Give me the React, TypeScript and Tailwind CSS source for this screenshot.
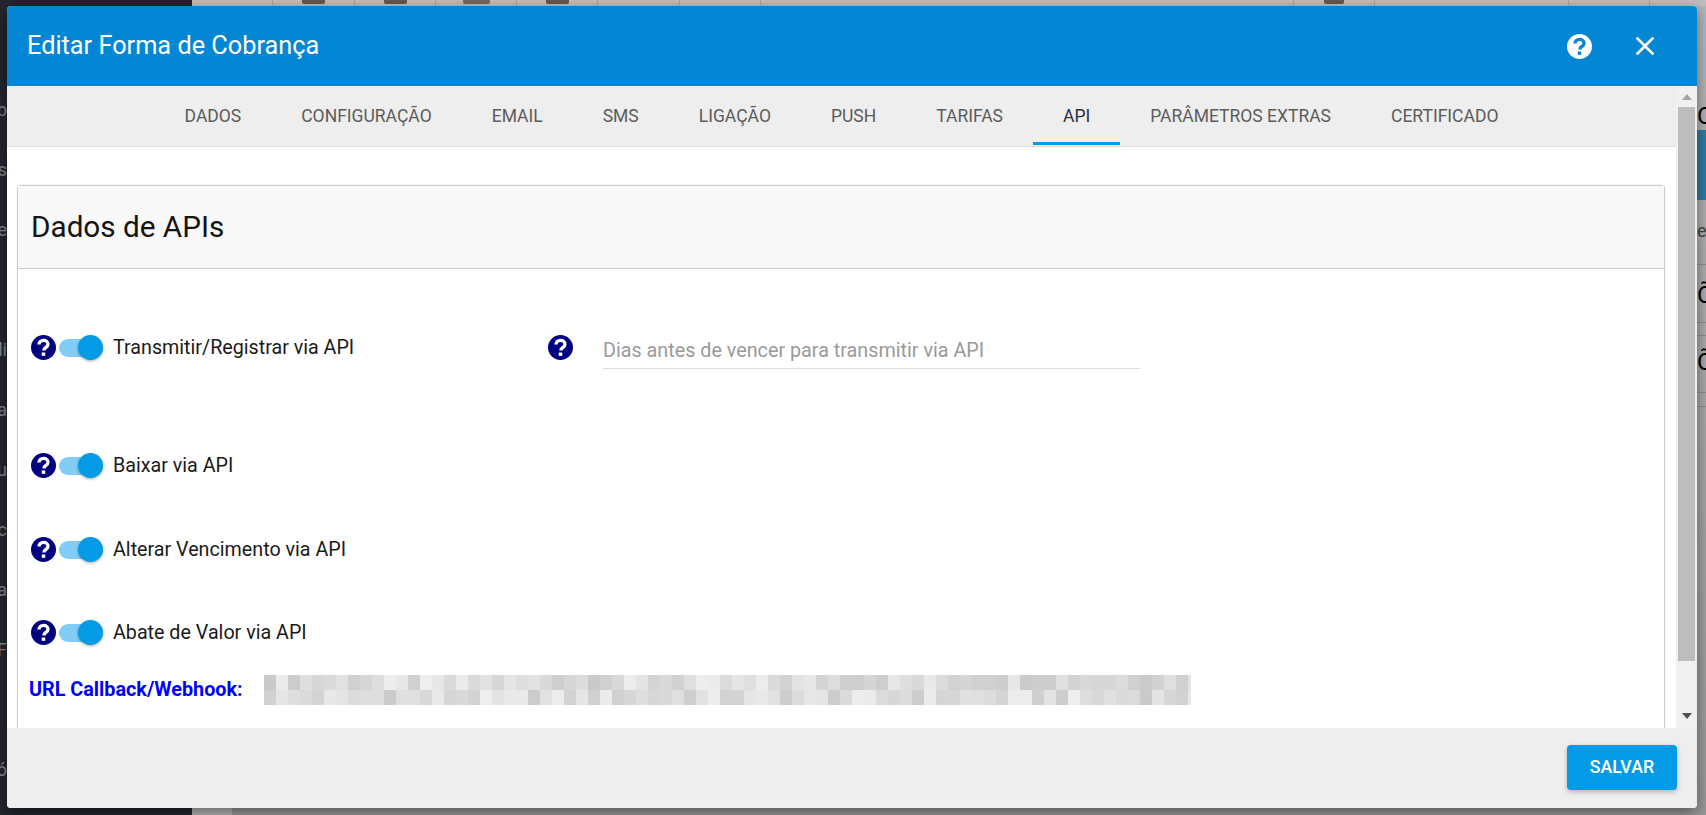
import { MdClose } from "react-icons/md";

const tabs = ["DADOS", "CONFIGURAÇÃO", "EMAIL", "SMS", "LIGAÇÃO", "PUSH", "TARIFAS", "API", "PARÂMETROS EXTRAS", "CERTIFICADO"];
const sideLabels = ["Cob", "Dados", "Parte", "", "Edi", "Lista", "Arqu", "Doc", "Área", "F", "", "Ló"];

// width of each toolbar cell, and the bit of icon that shows below the page edge
const topCells = [
  { w: 81, icon: "" },
  { w: 82, icon: "w-[23px] bg-[#5a5a5a]" },
  { w: 81, icon: "w-[23px] bg-[#5a5a5a]" },
  { w: 81, icon: "w-[27px] bg-[#6a6a6a]" },
  { w: 81, icon: "w-[23px] bg-[#5a5a5a]" },
  { w: 82, icon: "" },
  { w: 81, icon: "" },
  { w: 533, icon: "" },
  { w: 81, icon: "w-[20px] bg-[#5a5a5a]" },
  { w: 194, icon: "" },
  { w: 81, icon: "" },
];

function HelpIcon({ className, mark }: { className: string; mark: string }) {
  return (
    <svg width="25" height="25" viewBox="0 0 24 24" className={`shrink-0 ${className}`}>
      <circle cx="12" cy="12" r="12" fill="currentColor" />
      <path
        d="M7.7 9.2c0-2.5 1.9-4 4.3-4 2.5 0 4.3 1.4 4.3 3.6 0 1.7-1 2.6-2.3 3.4-1 .7-1.6 1.2-1.6 2.6"
        fill="none"
        stroke={mark}
        strokeWidth="3.2"
      />
      <rect x="10.3" y="16.8" width="3.4" height="3.2" fill={mark} />
    </svg>
  );
}

function Toggle() {
  return (
    <div className="relative ml-[3px] flex h-[25px] w-[44px] shrink-0 items-center">
      <div className="h-[18px] w-[44px] rounded-full bg-[#81cdf5]" />
      <div className="absolute right-0 top-0 h-[25px] w-[25px] rounded-full bg-[#039be5] shadow-[0_1px_3px_rgba(0,0,0,0.35)]" />
    </div>
  );
}

function SwitchRow({ label, className }: { label: string; className: string }) {
  return (
    <div className={`flex h-[25px] items-center ${className}`}>
      <HelpIcon className="text-[#000080]" mark="#ffffff" />
      <Toggle />
      <span className="ml-[10px] whitespace-nowrap text-[19.7px] leading-[25px] text-[#1a1a1a]">{label}</span>
    </div>
  );
}

function BlurredUrl() {
  const cells = [];
  for (let row = 0; row < 2; row++) {
    for (let col = 0; col < 78; col++) {
      const n = Math.sin(col * 12.9898 + row * 78.233) * 43758.5453;
      const shade = Math.round(202 + (n - Math.floor(n)) * 36);
      cells.push(<rect key={`${row}-${col}`} x={col * 12} y={row * 15} width={12} height={15} fill={`rgb(${shade},${shade},${shade})`} />);
    }
  }
  return (
    <svg width="927" height="30" className="ml-[23px] shrink-0" shapeRendering="crispEdges">
      {cells}
    </svg>
  );
}

export default function App() {
  return (
    <div className="relative h-[815px] w-[1706px] overflow-hidden bg-[#a3a3a3] font-['Roboto',sans-serif]">
      <div className="flex h-full">
        <aside className="flex w-[192px] shrink-0 flex-col bg-[#23252f] text-[18px] text-[#85878d]">
          <div className="flex h-[4px] gap-[3px] pl-[6px]">
            <div className="h-full w-[58px] rounded-b-[2px] bg-[#b9bcc2]" />
            <div className="h-full w-[78px] rounded-b-[2px] bg-[#1c6e9e]" />
          </div>
          <div className="pt-[96px]">
            {sideLabels.map((item, i) => (
              <div key={i} className="flex h-[60px] w-[7px] justify-end overflow-hidden whitespace-nowrap">
                {item}
              </div>
            ))}
          </div>
          <div className="mt-auto h-[7px] bg-[#191b24]" />
        </aside>
        <main className="flex flex-1 flex-col bg-gradient-to-b from-[#b5b5b5] to-[#979797]">
          <div className="flex h-[6px] bg-[#bfbfbf]">
            {topCells.map((cell, i) => (
              <div key={i} style={{ width: cell.w }} className="flex h-full justify-center border-r border-[#a6a6a6]">
                {cell.icon && <div className={`h-[4px] rounded-b-[2px] ${cell.icon}`} />}
              </div>
            ))}
          </div>
          <div className="ml-[1505px] pt-[96px] text-[24px] leading-[28px] text-black">O</div>
          <div className="ml-[1505px] h-[70px] bg-[#2f7b9f]" />
          <div className="ml-[1505px] mt-[21px] text-[18px] leading-[20px] text-[#444]">es</div>
          <div className="ml-[1505px] mt-[23px] border-t border-[#8c8c8c] pb-[12px] pt-[15px] text-[24px] leading-[30px] text-black">Õr</div>
          <div className="ml-[1505px] h-[14px] border-y border-[#8c8c8c]" />
          <div className="ml-[1505px] pb-[15px] pt-[11px] text-[24px] leading-[30px] text-black">Õr</div>
          <div className="ml-[1505px] h-[15px] border-y border-[#8c8c8c]" />
          <div className="mt-auto h-[7px] w-[40px] bg-[#b2b2b2]" />
        </main>
      </div>

      {/* modal */}
      <div className="absolute left-[7px] top-[6px] flex h-[802px] w-[1690px] flex-col overflow-hidden rounded-[4px] bg-white shadow-[0_4px_14px_rgba(0,0,0,0.45)]">
        <header className="flex h-[80px] shrink-0 items-center justify-between bg-[#0386d3] pl-[20px] pr-[36px] text-white">
          <h1 className="text-[25.3px] font-normal">Editar Forma de Cobrança</h1>
          <div className="flex items-center gap-[37px]">
            <HelpIcon className="text-white" mark="#0386d3" />
            <MdClose size={32} className="text-white" />
          </div>
        </header>

        <div className="flex min-h-0 flex-1">
          <div className="min-w-0 flex-1 overflow-hidden">
            <nav className="flex h-[61px] items-center justify-center border-b border-[#dedede] bg-[#eeeeee]">
              {tabs.map((tab) => (
                <div
                  key={tab}
                  className={`flex h-[58px] items-center border-b-[3px] px-[30px] pt-[3px] text-[17.5px] font-normal ${
                    tab === "API" ? "border-[#039be5] text-[#2a2d3f]" : "border-transparent text-[#5c5c5c]"
                  }`}
                >
                  {tab}
                </div>
              ))}
            </nav>

            <section className="ml-[10px] mr-[11px] mt-[38px] rounded-t-[4px] border border-b-0 border-[#cccccc] shadow-[0_-1px_2px_rgba(0,0,0,0.06)]">
              <div className="flex h-[83px] items-center border-b border-[#cccccc] bg-[#f8f8f8] pl-[13px]">
                <h2 className="text-[29.7px] font-normal text-[#141414]">Dados de APIs</h2>
              </div>
              <div className="pb-[40px] pl-[13px] pt-[66px]">
                <div className="mb-[93px] flex h-[25px]">
                  <div className="w-[517px]">
                    <SwitchRow label="Transmitir/Registrar via API" className="" />
                  </div>
                  <HelpIcon className="text-[#000080]" mark="#ffffff" />
                  <div className="ml-[30px] h-[34px] w-[537px] shrink-0 border-b border-[#dddddd] pt-[1px] text-[19.75px] text-[#9a9a9a]">
                    Dias antes de vencer para transmitir via API
                  </div>
                </div>
                <SwitchRow label="Baixar via API" className="mb-[59px]" />
                <SwitchRow label="Alterar Vencimento via API" className="mb-[58px]" />
                <SwitchRow label="Abate de Valor via API" className="mb-[30px]" />
                <div className="-ml-[2px] flex h-[30px] items-center">
                  <span className="w-[212px] shrink-0 whitespace-nowrap text-[19.8px] font-bold text-[#0000ff]">URL Callback/Webhook:</span>
                  <BlurredUrl />
                </div>
              </div>
            </section>
          </div>

          {/* scrollbar */}
          <div className="flex w-[21px] shrink-0 flex-col items-center bg-[#f0f0f0] px-[1px]">
            <svg width="10" height="6" viewBox="0 0 10 6" className="mt-[8px]">
              <polygon points="5,0 10,6 0,6" fill="#a3a3a3" />
            </svg>
            <div className="mt-[7px] h-[554px] w-[17px] bg-[#bdbdbd]" />
            <svg width="10" height="6" viewBox="0 0 10 6" className="mt-[52px]">
              <polygon points="0,0 10,0 5,6" fill="#505050" />
            </svg>
          </div>
        </div>

        <footer className="flex h-[80px] shrink-0 items-start justify-end bg-[#eeeeee] pr-[20px] pt-[17px]">
          <button className="h-[45px] w-[110px] rounded-[4px] bg-[#039be5] text-[17.8px] font-medium text-white shadow-[0_2px_5px_rgba(0,0,0,0.25)]">
            SALVAR
          </button>
        </footer>
      </div>
    </div>
  );
}
